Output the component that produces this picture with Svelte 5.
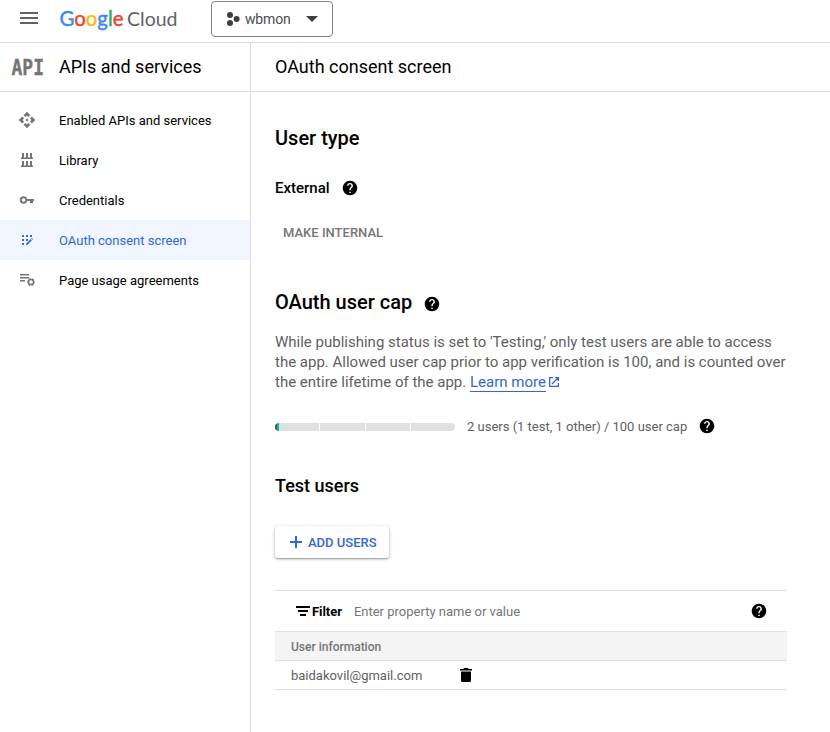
<script>
  const nav = [
    { label: 'Enabled APIs and services', icon: 'api' },
    { label: 'Library', icon: 'library' },
    { label: 'Credentials', icon: 'key' },
    { label: 'OAuth consent screen', icon: 'consent', active: true },
    { label: 'Page usage agreements', icon: 'agreements' }
  ];
  const segments = [44, 45, 44, 44];
</script>

{#snippet help()}
  <svg class="help" width="16" height="16" viewBox="1 1 22 22" aria-hidden="true">
    <path fill="#000" d="M12 2C6.48 2 2 6.48 2 12s4.480 10 10 10 10-4.480 10-10S17.520 2 12 2zm1 17h-2v-2h2v2zm2.070-7.750l-.9.920C13.450 12.900 13 13.500 13 15h-2v-.5c0-1.100.450-2.100 1.170-2.830l1.240-1.260c.370-.360.590-.860.590-1.410 0-1.100-.9-2-2-2s-2 .9-2 2H8c0-2.210 1.790-4 4-4s4 1.790 4 4c0 .880-.360 1.680-.930 2.250z" />
  </svg>
{/snippet}

{#snippet navIcon(name)}
  <svg class="nav-icon" width="18" height="18" viewBox={name === 'api' ? '0 0 24 24' : '0 0 18 18'} fill="currentColor" aria-hidden="true">
    {#if name === 'api'}
      <path d="M14 12l-2 2-2-2 2-2 2 2zm-2-6l2.120 2.120 2.500-2.500L12 1 7.380 5.620l2.500 2.500L12 6zm-6 6l2.120-2.120-2.500-2.500L1 12l4.620 4.620 2.500-2.500L6 12zm12 0l-2.120 2.120 2.500 2.500L23 12l-4.620-4.620-2.500 2.500L18 12zm-6 6l-2.120-2.120-2.500 2.500L12 23l4.620-4.620-2.500-2.500L12 18z" />
    {:else if name === 'library'}
      <path d="M4 2h2v4.500h2V2h2v4.500h2V2h2v4.500h1V8H3V6.500h1zM4 10h2v4.500h2V10h2v4.500h2V10h2v4.500h1V16H3v-1.500h1z" />
    {:else if name === 'key'}
      <circle cx="5.500" cy="9" r="2.750" fill="none" stroke="currentColor" stroke-width="1.900" />
      <path d="M8.500 8H16v2h-1v2h-3v-2H8.500z" />
    {:else if name === 'consent'}
      <path d="M4 4h2v2H4zM8 4h2v2H8zM12 4h2v2h-2zM4 8h2v2H4zM8 8h2v2H8zM4 12h2v2H4z" />
      <path d="M8 14v-1.300L12.700 8l1.200 1.200L9.200 14zM13.200 7.500l.6-.6 1.200 1.200-.6.6z" />
    {:else}
      <path d="M2 3h9v1.500H2zM2 6h9v1.500H2zM2 9h5v1.500H2z" />
      <circle cx="13" cy="11" r="2.600" fill="none" stroke="currentColor" stroke-width="1.500" />
      <circle cx="13" cy="11" r="3.650" fill="none" stroke="currentColor" stroke-width="1" stroke-dasharray="2 1.822" stroke-dashoffset="1" />
    {/if}
  </svg>
{/snippet}

<div class="page">
  <header class="topbar">
    <svg class="menu" width="18" height="12" viewBox="0 0 18 12" aria-hidden="true">
      <path fill="#5f6368" d="M0 0h18v2H0zM0 5h18v2H0zM0 10h18v2H0z" />
    </svg>
    <svg class="logo" width="118" height="30" viewBox="0 0 118 30" role="img" aria-label="Google Cloud">
      <text class="brand" x="-0.500" y="19.700" textLength="64" lengthAdjust="spacingAndGlyphs"><tspan fill="#4285f4" stroke="#4285f4">G</tspan><tspan fill="#ea4335" stroke="#ea4335">o</tspan><tspan fill="#fbbc04" stroke="#fbbc04">o</tspan><tspan fill="#4285f4" stroke="#4285f4">g</tspan><tspan fill="#34a853" stroke="#34a853">l</tspan><tspan fill="#ea4335" stroke="#ea4335">e</tspan></text>
      <text class="cloud" x="67" y="19.700" textLength="50.500" lengthAdjust="spacingAndGlyphs">Cloud</text>
    </svg>
    <button class="project">
      <svg width="14" height="14" viewBox="0 0 14 14" fill="#3c4043" aria-hidden="true">
        <circle cx="4" cy="3" r="3" /><circle cx="4" cy="11" r="3" /><circle cx="10.600" cy="7" r="3" />
      </svg>
      <span>wbmon</span>
      <svg class="caret" width="12" height="6" viewBox="0 0 12 6" aria-hidden="true"><path fill="#3c4043" d="M0 0h12L6 6z" /></svg>
    </button>
  </header>

  <div class="body">
    <aside>
      <div class="heading product">
        <svg width="34" height="28" viewBox="0 0 34 28" aria-hidden="true">
          <text class="api-mark" x="0.500" y="22" textLength="32.500" lengthAdjust="spacingAndGlyphs">API</text>
        </svg>
        <h1>APIs and services</h1>
      </div>
      <nav>
        {#each nav as item}
          <a class:active={item.active} href="#{item.icon}">
            {@render navIcon(item.icon)}
            <span>{item.label}</span>
          </a>
        {/each}
      </nav>
    </aside>

    <main>
      <div class="heading title"><h1>OAuth consent screen</h1></div>
      <div class="content">
        <h2>User type</h2>
        <div class="external"><strong>External</strong>{@render help()}</div>
        <button class="internal">MAKE INTERNAL</button>

        <h2 class="cap">OAuth user cap {@render help()}</h2>
        <p>
          While publishing status is set to 'Testing,' only test users are able to access<br />
          the app. Allowed user cap prior to app verification is 100, and is counted over<br />
          the entire lifetime of the app. <a class="learn" href="#learn">Learn more</a><svg class="external-link" width="12" height="12" viewBox="0 0 12 12" fill="none" stroke="#3367d6" stroke-width="1.300" aria-hidden="true"><path d="M5 1.650H1.650v8.700h8.700V7M7 1.650h3.350V5M10.350 1.650L4 8" /></svg>
        </p>
        <div class="usage">
          <div class="bar">
            {#each segments as width, i}
              <span style:width="{width}px">{#if i === 0}<i></i>{/if}</span>
            {/each}
          </div>
          <span class="count">2 users (1 test, 1 other) / 100 user cap</span>
          {@render help()}
        </div>

        <h3>Test users</h3>
        <button class="add">
          <svg width="12" height="12" viewBox="0 0 12 12" aria-hidden="true"><path fill="#3367d6" d="M5 0h2v5h5v2H7v5H5V7H0V5h5z" /></svg>
          ADD USERS
        </button>

        <section class="table">
          <div class="filter">
            <svg width="14" height="10" viewBox="0 0 14 10" aria-hidden="true"><path d="M0 0h14v2H0zM2 4h10v2H2zM4 8h6v2H4z" /></svg>
            <b>Filter</b>
            <span class="placeholder">Enter property name or value</span>
            {@render help()}
          </div>
          <div class="row head">User information</div>
          <div class="row">
            <span class="email">baidakovil@gmail.com</span>
            <svg width="12" height="14" viewBox="0 0 12 14" aria-hidden="true"><path d="M0 1h3.500L4 0h4l.5 1H12v1.500H0zM1 3.500h10V12.500q0 1.500-1.500 1.500h-7Q1 14 1 12.500z" /></svg>
          </div>
        </section>
      </div>
    </main>
  </div>
</div>

<style>
  :global(body) { margin: 0; background: #fff; }
  .page { width: 830px; height: 732px; overflow: hidden; display: flex; flex-direction: column; font-family: Roboto, "Liberation Sans", sans-serif; font-size: 13px; color: #000; }
  .page * { box-sizing: border-box; }
  svg { display: block; flex: none; }
  button { font-family: inherit; margin: 0; background: #fff; }
  h1, h2, h3, p { margin: 0; }
  .topbar { flex: none; height: 43px; border-bottom: 1px solid #dadce0; display: flex; align-items: flex-start; padding-left: 20px; }
  .menu { margin: 12px 22px 0 0; }
  .logo { margin-top: 6px; overflow: visible; }
  .brand, .cloud { font-family: Lato, sans-serif; }
  .brand { font-size: 20.5px; stroke-width: 0.45; }
  .cloud { font-size: 19.5px; fill: #5f6368; }
  .project { margin: 1px 0 0 33px; width: 122px; height: 36px; border: 1px solid #80868b; border-radius: 4px; display: flex; align-items: center; padding: 0 14px; font-size: 14px; color: #4a4d51; }
  .project span { margin-left: 5px; letter-spacing: -0.15px; }
  .caret { margin-left: auto; }
  .body { flex: 1; display: flex; min-height: 0; }
  aside { width: 251px; flex: none; border-right: 1px solid #dadce0; }
  main { flex: 1; }
  .heading { height: 49px; border-bottom: 1px solid #dadce0; display: flex; align-items: center; }
  .heading h1 { font-size: 18px; font-weight: 400; line-height: 24px; }
  .product { padding-left: 11px; gap: 14px; }
  .title { padding-left: 24px; }
  .api-mark { font-family: "DejaVu Sans Mono", monospace; font-weight: 700; font-size: 22px; fill: #757575; stroke: #757575; stroke-width: 0.4; }
  nav { padding-top: 8px; }
  nav a { height: 40px; padding-left: 18px; display: flex; align-items: center; gap: 23px; color: #000; text-decoration: none; }
  .nav-icon { color: #757575; }
  nav a.active { background: #f0f5ff; color: #3367d6; }
  nav a.active .nav-icon { color: #3367d6; }
  .content { padding: 32px 0 0 24px; width: 536px; }
  h2 { font-size: 20px; font-weight: 500; line-height: 28px; }
  .external { display: flex; align-items: center; height: 20px; margin-top: 26px; gap: 12px; font-size: 15px; }
  .external strong { font-weight: 500; }
  .internal { display: block; border: 0; padding: 0 8px; height: 32px; margin-top: 18px; font-size: 13px; font-weight: 500; color: #757575; }
  .cap { display: flex; align-items: center; gap: 12px; margin-top: 40px; }
  .cap .help { margin-top: 4px; }
  p { margin-top: 16px; font-size: 15px; line-height: 20px; color: #5f5f5f; white-space: nowrap; }
  .learn { color: #3367d6; text-decoration: none; border-bottom: 1px solid #3367d6; }
  .external-link { display: inline-block; margin-left: 2px; vertical-align: -1px; }
  .usage { display: flex; align-items: center; height: 20px; margin-top: 24px; }
  .bar { width: 180px; height: 8px; margin-top: 2px; display: flex; gap: 1px; border-radius: 4px; overflow: hidden; }
  .bar span { background: #e0e0e0; }
  .bar i { display: block; width: 4px; height: 8px; background: linear-gradient(90deg, #455a64 0 2px, #00bfa5 2px); }
  .count { margin: 0 12px; color: #616161; }
  h3 { margin-top: 38px; font-size: 18px; font-weight: 500; line-height: 24px; }
  .add { margin-top: 28px; width: 114px; height: 32px; border: 0; border-radius: 3px; padding: 0 0 0 15px; display: flex; align-items: center; gap: 6px; font-size: 13px; font-weight: 500; color: #3367d6; white-space: nowrap; box-shadow: 0 1px 2px rgba(0, 0, 0, 0.35), 0 1px 4px rgba(0, 0, 0, 0.15); }
  .table { margin-top: 32px; border-top: 1px solid #e0e0e0; }
  .filter { height: 41px; border-bottom: 1px solid #e0e0e0; display: flex; align-items: center; padding: 0 20px 0 21px; }
  .filter b { font-weight: 700; margin: 0 12px 0 2px; letter-spacing: -0.05px; }
  .placeholder { flex: 1; color: #757575; }
  .row { height: 29px; border-bottom: 1px solid #e0e0e0; display: flex; align-items: center; padding-left: 16px; color: #616161; }
  .head { background: #f4f4f4; font-size: 12px; font-weight: 500; color: #757575; padding-top: 1px; }
  .email { width: 169px; }
</style>
